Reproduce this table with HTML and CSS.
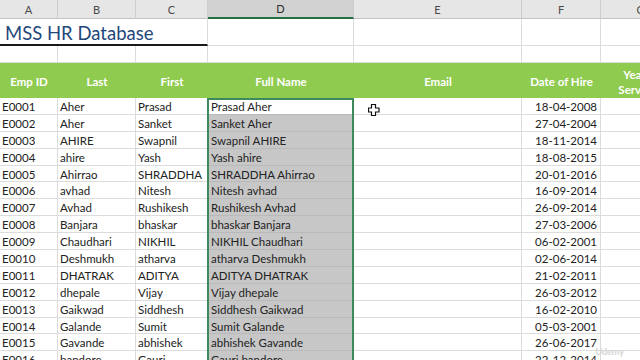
FILE: index.html
```html
<!DOCTYPE html>
<html>
<head>
<meta charset="utf-8">
<link rel="stylesheet" href="styles.css">
</head>
<body>
<div class="sheet">
  <div class="ch">A</div><div class="ch">B</div><div class="ch">C</div><div class="ch ch-sel">D</div><div class="ch">E</div><div class="ch">F</div><div class="ch ch-last">G</div>

  <div class="title">MSS HR Database</div><div class="c"></div><div class="c"></div><div class="c"></div><div class="c"></div>
  <div class="c"></div><div class="c"></div><div class="c"></div><div class="c"></div><div class="c"></div><div class="c"></div><div class="c"></div>

  <div class="h">Emp ID</div><div class="h">Last</div><div class="h">First</div><div class="h">Full Name</div><div class="h">Email</div><div class="h">Date of Hire</div><div class="h h2">Years<br>Service</div>

  <div class="c">E0001</div><div class="c">Aher</div><div class="c">Prasad</div><div class="c d act">Prasad Aher</div><div class="c e"><svg class="cursor" width="12" height="12" viewBox="0 0 12 12"><path d="M3.5 .5h4v3.5h3.5v4h-3.5v3.5h-4v-3.5h-3v-4h3z" fill="#fff" stroke="#111" stroke-width="1.2"/></svg></div><div class="c r">18-04-2008</div><div class="c"></div>
  <div class="c">E0002</div><div class="c">Aher</div><div class="c">Sanket</div><div class="c d">Sanket Aher</div><div class="c"></div><div class="c r">27-04-2004</div><div class="c"></div>
  <div class="c">E0003</div><div class="c">AHIRE</div><div class="c">Swapnil</div><div class="c d">Swapnil AHIRE</div><div class="c"></div><div class="c r">18-11-2014</div><div class="c"></div>
  <div class="c">E0004</div><div class="c">ahire</div><div class="c">Yash</div><div class="c d">Yash ahire</div><div class="c"></div><div class="c r">18-08-2015</div><div class="c"></div>
  <div class="c">E0005</div><div class="c">Ahirrao</div><div class="c">SHRADDHA</div><div class="c d">SHRADDHA Ahirrao</div><div class="c"></div><div class="c r">20-01-2016</div><div class="c"></div>
  <div class="c">E0006</div><div class="c">avhad</div><div class="c">Nitesh</div><div class="c d">Nitesh avhad</div><div class="c"></div><div class="c r">16-09-2014</div><div class="c"></div>
  <div class="c">E0007</div><div class="c">Avhad</div><div class="c">Rushikesh</div><div class="c d">Rushikesh Avhad</div><div class="c"></div><div class="c r">26-09-2014</div><div class="c"></div>
  <div class="c">E0008</div><div class="c">Banjara</div><div class="c">bhaskar</div><div class="c d">bhaskar Banjara</div><div class="c"></div><div class="c r">27-03-2006</div><div class="c"></div>
  <div class="c">E0009</div><div class="c">Chaudhari</div><div class="c">NIKHIL</div><div class="c d">NIKHIL Chaudhari</div><div class="c"></div><div class="c r">06-02-2001</div><div class="c"></div>
  <div class="c">E0010</div><div class="c">Deshmukh</div><div class="c">atharva</div><div class="c d">atharva Deshmukh</div><div class="c"></div><div class="c r">02-06-2014</div><div class="c"></div>
  <div class="c">E0011</div><div class="c">DHATRAK</div><div class="c">ADITYA</div><div class="c d">ADITYA DHATRAK</div><div class="c"></div><div class="c r">21-02-2011</div><div class="c"></div>
  <div class="c">E0012</div><div class="c">dhepale</div><div class="c">Vijay</div><div class="c d">Vijay dhepale</div><div class="c"></div><div class="c r">26-03-2012</div><div class="c"></div>
  <div class="c">E0013</div><div class="c">Gaikwad</div><div class="c">Siddhesh</div><div class="c d">Siddhesh Gaikwad</div><div class="c"></div><div class="c r">16-02-2010</div><div class="c"></div>
  <div class="c">E0014</div><div class="c">Galande</div><div class="c">Sumit</div><div class="c d">Sumit Galande</div><div class="c"></div><div class="c r">05-03-2001</div><div class="c"></div>
  <div class="c">E0015</div><div class="c">Gavande</div><div class="c">abhishek</div><div class="c d">abhishek Gavande</div><div class="c"></div><div class="c r">26-06-2017</div><div class="c"></div>
  <div class="c">E0016</div><div class="c">bandore</div><div class="c">Gauri</div><div class="c d">Gauri bandore</div><div class="c"></div><div class="c r">22-12-2014</div><div class="c"></div>

  <div class="selection"></div>
</div>
<div class="watermark">Udemy</div>
</body>
</html>
```
FILE: styles.css
```css
html, body {
  margin: 0;
  padding: 0;
  width: 640px;
  height: 360px;
  overflow: hidden;
  background: #fff;
}
body {
  position: relative;
  font-family: Lato, "Open Sans", sans-serif;
  color: #222;
}
.sheet {
  position: relative;
  display: grid;
  grid-template-columns: 58px 78px 72px 146px 168px 79px 80px;
  grid-template-rows: 19px 27px 17px 35px repeat(16, 16.9px);
  width: 681px;
}
.ch {
  background: #e6e6e6;
  border-right: 1px solid #cdcdcd;
  border-bottom: 1px solid #c2c2c2;
  color: #4a4a4a;
  font-size: 11px;
  display: flex;
  align-items: center;
  justify-content: center;
  box-sizing: border-box;
}
.ch-sel {
  background: #d2d2d2;
  border-bottom: 2px solid #217346;
  color: #2a2a2a;
}
.title {
  grid-column: 1 / 4;
  border-bottom: 2px solid #1a1a1a;
  border-right: 1px solid #dcdcdc;
  color: #1f477a;
  font-size: 18.5px;
  padding-left: 5px;
  padding-top: 3px;
  display: flex;
  align-items: center;
  box-sizing: border-box;
}
.c {
  border-right: 1px solid #dcdcdc;
  border-bottom: 1px solid #dcdcdc;
  box-sizing: border-box;
  font-size: 11.5px;
  padding-left: 2px;
  padding-top: 1px;
  display: flex;
  align-items: center;
  white-space: nowrap;
  overflow: hidden;
}
.c.r {
  justify-content: flex-end;
  padding-right: 3px;
}
.c.d {
  background: #c7c7c7;
  border-bottom-color: #b9b9b9;
  padding-left: 3px;
}
.c.d.act {
  background: #fff;
}
.c.e {
  position: relative;
  overflow: visible;
}
.cursor {
  position: absolute;
  left: 14px;
  top: 6px;
}
.h {
  background: #8fcb4f;
  color: #fff;
  font-weight: bold;
  font-size: 11.5px;
  padding-top: 2px;
  box-sizing: border-box;
  display: flex;
  align-items: center;
  justify-content: center;
  text-align: center;
  line-height: 15px;
}
.h2 {
  padding-right: 8px;
}
.selection {
  position: absolute;
  z-index: 3;
  grid-column: 4 / 5;
  grid-row: 5 / 21;
  top: 0;
  bottom: 0;
  left: -1px;
  right: 0;
  border: 2px solid #3d8b5d;
  pointer-events: none;
}
.watermark {
  position: absolute;
  right: 16px;
  bottom: 3px;
  font-size: 9px;
  color: #d4d4d4;
  font-weight: bold;
}
```
